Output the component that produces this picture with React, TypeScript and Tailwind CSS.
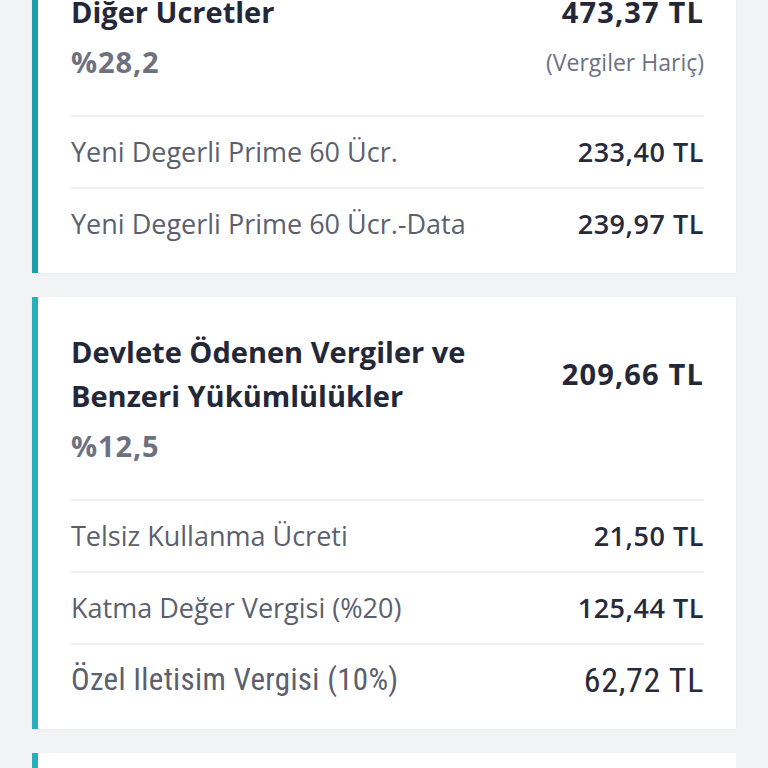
type Row = { label: string; amount: string; narrow?: boolean };

type Group = {
  title: string[];
  total: string;
  percent: string;
  note?: string;
  bar: string;
  rows: Row[];
};

const groups: Group[] = [
  {
    title: ["Diğer Ücretler"],
    total: "473,37 TL",
    percent: "%28,2",
    note: "(Vergiler Hariç)",
    bar: "bg-[#1c9fab]",
    rows: [
      { label: "Yeni Degerli Prime 60 Ücr.", amount: "233,40 TL" },
      { label: "Yeni Degerli Prime 60 Ücr.-Data", amount: "239,97 TL" },
    ],
  },
  {
    title: ["Devlete Ödenen Vergiler ve", "Benzeri Yükümlülükler"],
    total: "209,66 TL",
    percent: "%12,5",
    bar: "bg-[#2aafbb]",
    rows: [
      { label: "Telsiz Kullanma Ücreti", amount: "21,50 TL" },
      { label: "Katma Değer Vergisi (%20)", amount: "125,44 TL" },
      { label: "Özel Iletisim Vergisi (10%)", amount: "62,72 TL", narrow: true },
    ],
  },
];

const Card = ({ group }: { group: Group }) => {
  return (
    <div className="flex bg-white shadow-[0_1px_3px_rgba(0,0,0,0.04)]">
      <div className={`w-[6px] shrink-0 ${group.bar}`} />
      <div className="flex-1 pl-[33px] pr-[32px] pt-[33px] pb-[14px]">
        {/* Header */}
        <div className="flex items-center justify-between">
          <div className="text-[29px] leading-[44px] font-bold text-[#232738]">
            {group.title.map((t) => (
              <div key={t}>{t}</div>
            ))}
          </div>
          <div className="text-[29px] leading-[44px] font-bold tracking-[0.04em] text-[#232738] whitespace-nowrap">
            {group.total}
          </div>
        </div>
        <div className="mt-[6px] mb-[31px] flex items-center justify-between">
          <div className="text-[29px] leading-[44px] font-bold tracking-[0.03em] text-[#6d7181]">
            {group.percent}
          </div>
          {group.note && <div className="text-[23px] text-[#6d7181]">{group.note}</div>}
        </div>

        {/* Rows */}
        {group.rows.map((r) => (
          <div key={r.label}>
            <div className="h-[2px] bg-[#eceef1]" />
            {r.narrow ? (
              <div className="flex h-[70px] items-center justify-between font-['Roboto_Condensed','Liberation_Sans_Narrow','DejaVu_Sans_Condensed',Roboto,sans-serif] [font-stretch:condensed] text-[31px] tracking-[0.01em]">
                <span className="text-[#5b5f6e]">{r.label}</span>
                <span className="text-[34px] tracking-[0.02em] text-[#262a3a]">{r.amount}</span>
              </div>
            ) : (
              <div className="flex h-[70px] items-center justify-between text-[27px]">
                <span className="text-[#5b5f6e]">{r.label}</span>
                <span className="font-semibold tracking-[0.02em] text-[#262a3a]">{r.amount}</span>
              </div>
            )}
          </div>
        ))}
      </div>
    </div>
  );
};

const App = () => {
  return (
    <div className="h-[768px] overflow-hidden bg-[#f2f3f5] font-['Open_Sans',sans-serif]">
      <div className="-mt-[43px] flex flex-col gap-[24px] pl-[32px] pr-[32px]">
        {groups.map((g) => (
          <Card key={g.total} group={g} />
        ))}
        <div className="flex h-[120px] bg-white">
          <div className="w-[6px] bg-[#2aafbb]" />
        </div>
      </div>
    </div>
  );
};

export default App;
